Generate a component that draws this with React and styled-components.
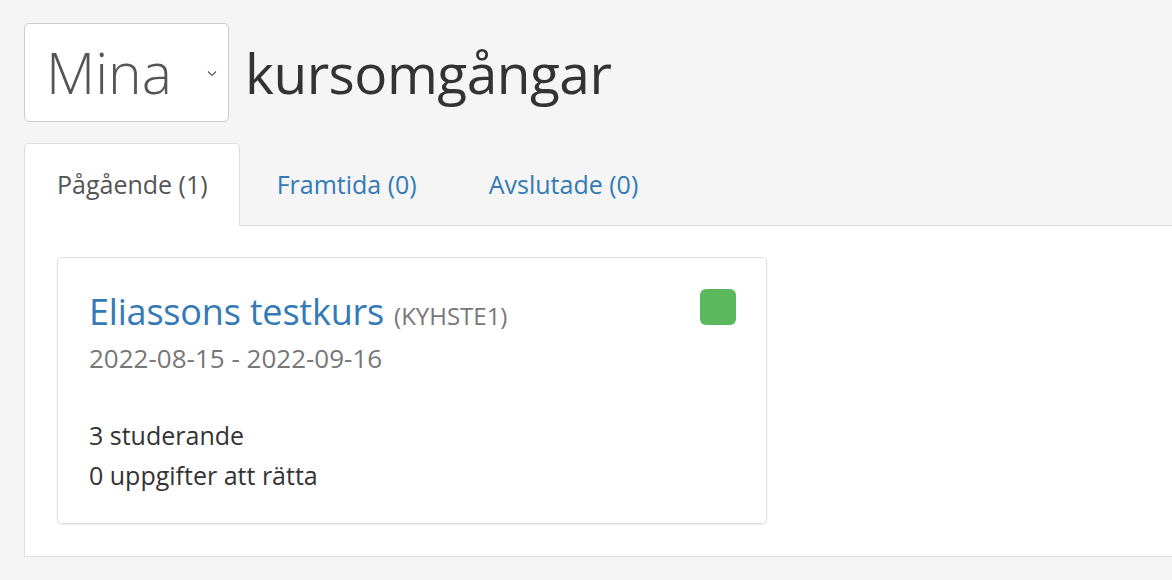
import styled, { createGlobalStyle } from 'styled-components'

const GlobalStyle = createGlobalStyle`
    html, body {
        margin: 0;
        padding: 0;
        background: #f5f5f5;
        font-family: "Open Sans", "Noto Sans", sans-serif;
        color: #333;
    }
`

const Page = styled.div`
    padding: 22px 0 0 24px;
    height: 558px;
    overflow: hidden;
`
const Header = styled.div`
    display: flex;
    align-items: center;
    gap: 16px;
    height: 100px;
`
const Select = styled.div`
    width: 205px;
    height: 99px;
    box-sizing: border-box;
    background: #fff;
    border: 1px solid #ccc;
    border-radius: 5px;
    display: flex;
    align-items: center;
    justify-content: space-between;
    padding: 0 11px 0 21px;
    font-size: 57px;
    color: #555;
    font-weight: 300;
`
const Chevron = styled.svg`
    width: 10px;
    height: 7px;
    margin-top: 2px;
`
const Title = styled.h1`
    margin: 0;
    font-size: 55px;
    font-weight: 400;
    color: #333;
    letter-spacing: -0.5px;
`
const Tabs = styled.div`
    display: flex;
    margin-top: 21px;
    border-bottom: 1px solid #ddd;
    height: 83px;
    box-sizing: border-box;
`
const Tab = styled.div`
    display: flex;
    align-items: center;
    height: 83px;
    box-sizing: border-box;
    padding: 0 ${p => (p.$active ? 31 : 34)}px 2px ${p => (p.$active ? 32 : 36)}px;
    font-size: 25px;
    color: ${p => (p.$active ? '#555' : '#337ab7')};
    background: ${p => (p.$active ? '#fff' : 'transparent')};
    border: 1px solid ${p => (p.$active ? '#ddd' : 'transparent')};
    border-bottom-color: ${p => (p.$active ? '#fff' : 'transparent')};
    border-radius: 5px 5px 0 0;
    margin-bottom: -1px;
`
const Panel = styled.div`
    background: #fff;
    border-left: 1px solid #ddd;
    border-bottom: 1px solid #ddd;
    padding: 31px 32px 32px 32px;
`
const Card = styled.div`
    width: 710px;
    height: 267px;
    box-sizing: border-box;
    border: 1px solid #ddd;
    border-radius: 5px;
    box-shadow: 0 1px 2px rgba(0, 0, 0, 0.08);
    padding: 32px 31px 0;
    position: relative;
`
const CardTitle = styled.div`
    display: flex;
    align-items: baseline;
    gap: 10px;
    line-height: 44px;
`
const CourseName = styled.a`
    font-size: 36px;
    color: #337ab7;
    text-decoration: none;
    letter-spacing: -0.2px;
`
const Code = styled.span`
    font-size: 24px;
    color: #777;
`
const Status = styled.div`
    position: absolute;
    top: 31px;
    right: 30px;
    width: 36px;
    height: 36px;
    border-radius: 6px;
    background: #5cb85c;
`
const Dates = styled.div`
    margin-top: 5px;
    font-size: 26px;
    line-height: 30px;
    color: #777;
`
const Stats = styled.div`
    margin-top: 42px;
    font-size: 25px;
    line-height: 40px;
    color: #333;
`

const App = () => {
    return (
        <>
            <GlobalStyle />
            <Page>
                <Header>
                    <Select>
                        Mina
                        <Chevron viewBox="0 0 10 7">
                            <path d="M1 1.5 L5 5.5 L9 1.5" fill="none" stroke="#555" strokeWidth="1.1" />
                        </Chevron>
                    </Select>
                    <Title>kursomgångar</Title>
                </Header>
                <Tabs>
                    <Tab $active>Pågående (1)</Tab>
                    <Tab>Framtida (0)</Tab>
                    <Tab>Avslutade (0)</Tab>
                </Tabs>
                <Panel>
                    <Card>
                        <CardTitle>
                            <CourseName href="#">Eliassons testkurs</CourseName>
                            <Code>(KYHSTE1)</Code>
                        </CardTitle>
                        <Status />
                        <Dates>2022-08-15 - 2022-09-16</Dates>
                        <Stats>
                            <div>3 studerande</div>
                            <div>0 uppgifter att rätta</div>
                        </Stats>
                    </Card>
                </Panel>
            </Page>
        </>
    )
}

export default App
